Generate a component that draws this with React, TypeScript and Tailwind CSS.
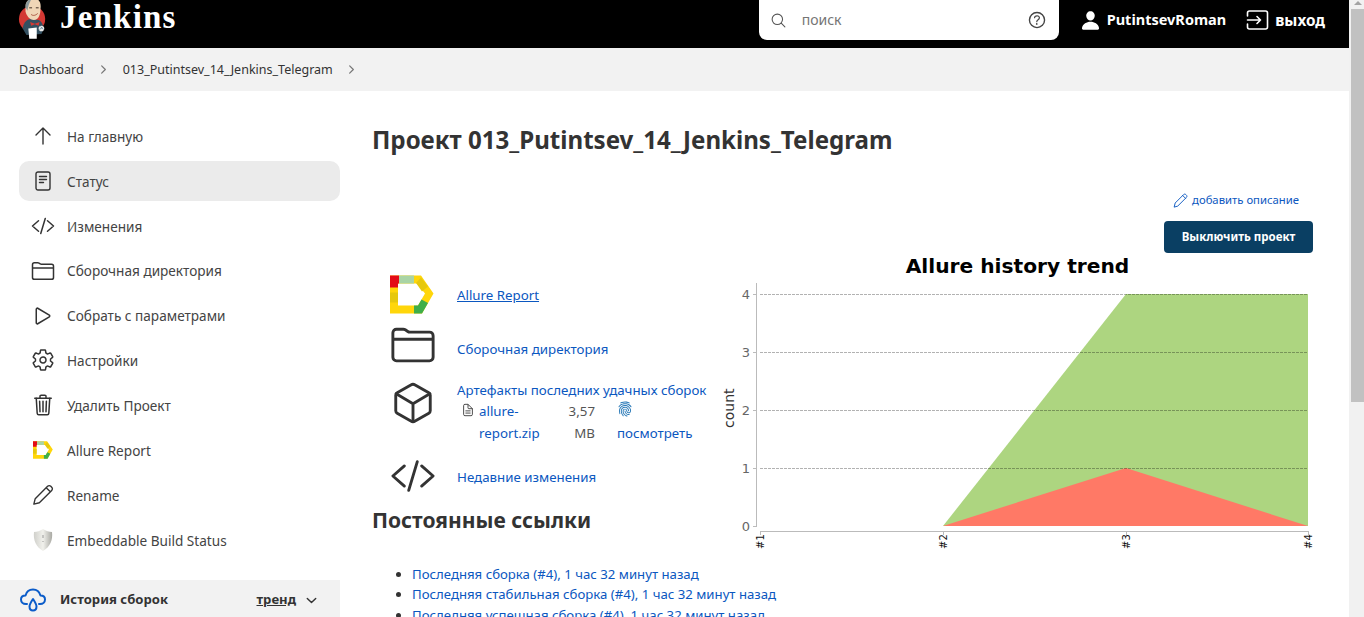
import React from 'react';
import {
  IoCodeSlashOutline,
  IoFolderOutline,
  IoPlayOutline,
  IoSettingsOutline,
  IoTrashOutline,
  IoCubeOutline,
  IoSearchOutline,
  IoHelpCircleOutline,
  IoPerson,
  IoFingerPrint,
  IoDocumentTextOutline,
  IoChevronForward,
  IoChevronDown,
} from 'react-icons/io5';

const JenkinsLogo = () => (
  <svg viewBox="0 0 32 42" className="w-[30px] h-10 shrink-0">
    <circle cx="15" cy="20" r="14" fill="#d33833" />
    <path d="M5 30 C6 23 10 20 14 20 L22 21 C26 23 27 27 27 31 L25 36 L9 37 Z" fill="#335061" />
    <path d="M8 6 C8 1 12 -2 17 -2 C22 -2 25 2 24 9 C24 15 22 21 17 21 C12 21 9 16 8 12 Z" fill="#f0d6b7" />
    <path d="M8 7 C8 2 11 -1 15 -2 C12 2 11 6 10 11 Z" fill="#49728b" opacity="0.6" />
    <path d="M12 8 h3 M19 8 h3" stroke="#3a2a20" strokeWidth="1" />
    <path d="M14 15 C16 17 19 16 21 14" stroke="#a5503c" strokeWidth="1" fill="none" />
    <path d="M13 23 L18 25 L23 23 L22 27 L18 25.5 L14 27 Z" fill="#d33833" />
    <path d="M11 30 L20 29 L20 41 L12 41 Z" fill="#ffffff" />
    <circle cx="25" cy="30" r="3" fill="#e8e8e8" />
    <path d="M24 28 l3 3 M23 31 l3 -2" stroke="#49728b" strokeWidth="0.7" />
  </svg>
);

const AllureLogo = ({ className }: { className: string }) => (
  <svg viewBox="0 0 44 38" className={className}>
    <path d="M0 0 H31 L43.5 18 L32 38 H0 Z M8 8 V30 H28 L35 18 L27 8 Z" fill="#ffd60a" fillRule="evenodd" />
    <path d="M0 0 H9 V8 H8 V12 H0 Z" fill="#e30b17" />
    <path d="M9 0 H24 V8 H9 Z" fill="#a9d4a5" />
    <path d="M0 17 H8 V27 H0 Z" fill="#e6c80d" />
    <path d="M31 2 L38 11 L32 16 L26 7.5 Z" fill="#e6c80d" />
    <path d="M24 38 H32 L38 27.5 L31.5 24 L28 30 H24 Z" fill="#3fae49" />
  </svg>
);

const StatusIcon = () => (
  <svg viewBox="0 0 16 20" className="w-4 h-5" fill="none" stroke="#333" strokeWidth="1.4" strokeLinecap="round">
    <rect x="1" y="1" width="14" height="18" rx="2" />
    <path d="M4.5 5.5 H11.5 M4.5 8.5 H11.5 M4.5 11.5 H8.5" />
  </svg>
);

const ArrowIcon = () => (
  <svg viewBox="0 0 16 18" className="w-4 h-[18px]" fill="none" stroke="#333" strokeWidth="1.4" strokeLinecap="round" strokeLinejoin="round">
    <path d="M8 17 V1 M1 8 L8 1 L15 8" />
  </svg>
);

const PencilIcon = ({ size, color }: { size: number; color: string }) => (
  <svg viewBox="0 0 24 24" width={size} height={size} fill="none" stroke={color} strokeWidth="1.5" strokeLinejoin="round" strokeLinecap="round">
    <path d="M2 22 L3.5 16 L17 2.5 C18 1.5 19.5 1.5 20.5 2.5 L21.5 3.5 C22.5 4.5 22.5 6 21.5 7 L8 20.5 Z M15.5 4 L20 8.5" />
  </svg>
);

const ShieldIcon = () => (
  <svg viewBox="0 0 20 22" className="w-5 h-[22px]">
    <defs>
      <linearGradient id="shield" x1="0" y1="0" x2="1" y2="0">
        <stop offset="0" stopColor="#d0d0cb" />
        <stop offset="0.5" stopColor="#f1f1ec" />
        <stop offset="1" stopColor="#a9a9a3" />
      </linearGradient>
    </defs>
    <path d="M10 0 C7 2 4 3 1 3 C0 11 3 18 10 22 C17 18 20 11 19 3 C16 3 13 2 10 0 Z" fill="url(#shield)" />
    <path d="M10 6 V9 M10 12 V13" stroke="#999" strokeWidth="1" />
  </svg>
);

const CloudDropIcon = () => (
  <svg viewBox="0 0 26 24" className="w-[26px] h-6" fill="none" stroke="#0b5cc9" strokeWidth="2" strokeLinecap="round" strokeLinejoin="round">
    <path d="M7 16 H6 C3 16 1 14 1 11.5 C1 9 3 7.5 5.5 7.5 C6.5 3.5 9.5 1.5 13 1.5 C17 1.5 19.5 4 20.5 7.5 C23 7.5 25 9 25 11.5 C25 14 23 16 20 16 H19" />
    <path d="M13 11 C11 14 9.5 16 9.5 18.5 C9.5 20.8 11 22.5 13 22.5 C15 22.5 16.5 20.8 16.5 18.5 C16.5 16 15 14 13 11 Z" />
  </svg>
);

const LogoutIcon = () => (
  <svg viewBox="0 0 22 20" className="w-[23px] h-5" fill="none" stroke="#fff" strokeWidth="1.6" strokeLinecap="round" strokeLinejoin="round">
    <path d="M1 6 V3 C1 1.8 1.8 1 3 1 H19 C20.2 1 21 1.8 21 3 V17 C21 18.2 20.2 19 19 19 H3 C1.8 19 1 18.2 1 17 V14" />
    <path d="M1 10 H14 M10.5 6.5 L14 10 L10.5 13.5" />
  </svg>
);

const sideItems = [
  { label: 'На главную', icon: <ArrowIcon /> },
  { label: 'Статус', icon: <StatusIcon />, active: true },
  { label: 'Изменения', icon: <IoCodeSlashOutline size={24} /> },
  { label: 'Сборочная директория', icon: <IoFolderOutline size={24} /> },
  { label: 'Собрать с параметрами', icon: <IoPlayOutline size={24} /> },
  { label: 'Настройки', icon: <IoSettingsOutline size={24} /> },
  { label: 'Удалить Проект', icon: <IoTrashOutline size={24} /> },
  { label: 'Allure Report', icon: <AllureLogo className="w-5 h-[18px]" /> },
  { label: 'Rename', icon: <PencilIcon size={22} color="#333" /> },
  { label: 'Embeddable Build Status', icon: <ShieldIcon /> },
];

const permalinks = [
  'Последняя сборка (#4), 1 час 32 минут назад',
  'Последняя стабильная сборка (#4), 1 час 32 минут назад',
  'Последняя успешная сборка (#4), 1 час 32 минут назад',
];

const TrendChart = () => {
  const gridY = [294, 352, 410, 468, 526];
  const ticks = [
    { x: 760, label: '#1' },
    { x: 943, label: '#2' },
    { x: 1126, label: '#3' },
    { x: 1308, label: '#4' },
  ];
  return (
    <svg viewBox="720 250 600 310" className="w-[600px] h-[310px] shrink-0">
      <polygon points="943,526 1126,294 1308,294 1308,526" fill="#add580" />
      <polygon points="943,526 1126,468 1308,526" fill="#ff7966" />
      {gridY.slice(0, 4).map((y) => (
        <line key={y} x1="760" x2="1308" y1={y + 0.5} y2={y + 0.5} stroke="#000" strokeOpacity="0.3" strokeDasharray="3 1" />
      ))}
      <line x1="756.5" x2="756.5" y1="283" y2="527" stroke="#bbb" />
      <line x1="760" x2="1308" y1="531.5" y2="531.5" stroke="#bbb" />
      {gridY.map((y) => (
        <line key={y} x1="756" x2="753" y1={y + 0.5} y2={y + 0.5} stroke="#bbb" />
      ))}
      {gridY.map((y, i) => (
        <text key={y} x="746" y={y + 5} textAnchor="middle" fontSize="13" fill="#666" fontFamily="'DejaVu Sans', sans-serif">
          {4 - i}
        </text>
      ))}
      {ticks.map((t) => (
        <g key={t.x}>
          <line x1={t.x + 0.5} x2={t.x + 0.5} y1="531" y2="535" stroke="#bbb" />
          <text
            transform={`translate(${t.x + 4} 549) rotate(-90)`}
            fontSize="10"
            fill="#111"
            fontFamily="'DejaVu Sans', sans-serif"
          >
            {t.label}
          </text>
        </g>
      ))}
      <text transform="translate(734 428) rotate(-90)" fontSize="14" fill="#333" fontFamily="'DejaVu Sans', sans-serif">
        count
      </text>
      <text x="1017.5" y="273" textAnchor="middle" fontSize="20.2" fontWeight="bold" fill="#000" fontFamily="'DejaVu Sans', sans-serif">
        Allure history trend
      </text>
    </svg>
  );
};

const App: React.FC = () => {
  return (
    <div className="flex h-[617px] w-[1364px] overflow-hidden bg-white text-[#333] font-['Noto_Sans',sans-serif]">
      <div className="w-[1349px] shrink-0 flex flex-col">
        {/* Шапка */}
        <header className="h-12 bg-black flex items-start shrink-0 pl-[18px] pr-[24px]">
          <div className="flex items-center gap-3 h-10 overflow-hidden">
            <JenkinsLogo />
            <span className="text-white text-[33px] font-bold font-['Liberation_Serif',serif] tracking-[1.2px] leading-none -mt-[5px]">
              Jenkins
            </span>
          </div>
          <div className="ml-auto w-[300px] h-10 bg-white rounded-b-lg flex items-center px-[11px]">
            <IoSearchOutline size={17} color="#555" />
            <span className="ml-[15px] text-sm text-[#757575]">поиск</span>
            <IoHelpCircleOutline size={22} color="#444" className="ml-auto" />
          </div>
          <div className="flex items-center h-10 ml-[21px] text-white font-bold">
            <IoPerson size={21} />
            <span className="ml-[6px] text-[14.5px]">PutintsevRoman</span>
            <span className="ml-[20px]"><LogoutIcon /></span>
            <span className="ml-[6px] text-[15.3px]">выход</span>
          </div>
        </header>

        {/* Хлебные крошки */}
        <nav className="h-[43px] shrink-0 bg-[#f2f2f2] flex items-center pl-[19px] text-[12.5px] text-[#333]">
          <span className="pt-[1px]">Dashboard</span>
          <IoChevronForward size={13} color="#777" className="ml-[13px]" />
          <span className="ml-[13px] pt-[1px]">013_Putintsev_14_Jenkins_Telegram</span>
          <IoChevronForward size={13} color="#777" className="ml-[12px]" />
        </nav>

        <div className="flex flex-1 min-h-0">
          {/* Боковая панель */}
          <aside className="w-[340px] shrink-0 pt-[25px] flex flex-col">
            <div className="flex flex-col gap-[4.9px] pl-[19px]">
              {sideItems.map((item) => (
                <div
                  key={item.label}
                  className={`h-10 flex items-center rounded-[10px] text-[13.6px] ${item.active ? 'bg-[#ebebeb]' : ''}`}
                >
                  <span className="w-12 flex justify-center shrink-0 text-[#333]">{item.icon}</span>
                  <span className="text-[#444] pt-[2px]">{item.label}</span>
                </div>
              ))}
            </div>
            <div className="mt-[20px] h-[40px] bg-[#f2f2f2] flex items-center pl-5 pr-[21px] shrink-0">
              <CloudDropIcon />
              <span className="ml-[14px] text-[13.1px] font-bold text-[#333]">История сборок</span>
              <span className="ml-auto text-[13.1px] font-bold text-[#333] underline">тренд</span>
              <IoChevronDown size={15} color="#333" className="ml-[8px]" />
            </div>
          </aside>

          {/* Основная часть */}
          <main className="flex-1 min-w-0 pl-8 pr-[36px] pt-[32px]">
            <h1 className="text-[24.1px] leading-[34px] font-bold text-[#333]">Проект 013_Putintsev_14_Jenkins_Telegram</h1>
            <div className="mt-[35px] flex justify-end items-center pr-[14px] text-[11.3px] text-[#0b57c0]">
              <PencilIcon size={15} color="#0b57c0" />
              <span className="ml-[4px]">добавить описание</span>
            </div>
            <div className="mt-[12px] flex justify-end">
              <button className="w-[149px] h-8 rounded bg-[#0a3f63] text-white text-[11.5px] font-bold">Выключить проект</button>
            </div>
            <div className="flex justify-between -mr-[7px] mt-[-3px]">
              <div className="w-[340px] shrink-0 text-[13.3px]">
                <div className="flex items-center h-[80px] mt-[6px] pl-[18px]">
                  <AllureLogo className="w-[44px] h-[39px] shrink-0 -mt-[2px]" />
                  <a className="ml-[23px] text-[#0b57c0] underline mt-[1px]">Allure Report</a>
                </div>
                <div className="flex items-center h-[38px] -mt-[10px] pl-[18px]">
                  <IoFolderOutline size={46} className="shrink-0" />
                  <a className="ml-[21px] text-[#0b57c0] mt-[10px]">Сборочная директория</a>
                </div>
                <div className="flex mt-[15px] pl-[18px]">
                  <IoCubeOutline size={46} className="shrink-0 mt-[1px]" />
                  <div className="ml-[21px] leading-[22px]">
                    <a className="text-[#0b57c0] whitespace-nowrap">Артефакты последних удачных сборок</a>
                    <div className="grid grid-cols-[18px_82px_34px_80px] ml-[4px] -mt-[1px]">
                      <IoDocumentTextOutline size={14} className="mt-[3px]" />
                      <a className="text-[#0b57c0]">allure-<br />report.zip</a>
                      <span className="text-right text-[#555]">3,57<br />MB</span>
                      <a className="text-[#0b57c0] pl-[22px]">
                        <IoFingerPrint size={16} className="mt-[1px] mb-[5px]" color="#2a7ab8" />
                        посмотреть
                      </a>
                    </div>
                  </div>
                </div>
                <div className="flex items-center h-[46px] mt-[11px] pl-[18px]">
                  <IoCodeSlashOutline size={46} className="shrink-0 -mt-[4px]" />
                  <a className="ml-[21px] text-[#0b57c0]">Недавние изменения</a>
                </div>
                <h2 className="mt-[5px] text-[21px] leading-7 font-bold text-[#333] whitespace-nowrap">Постоянные ссылки</h2>
                <ul className="mt-[30px] pl-10 list-disc text-[13.2px] leading-[20.5px] text-[#333] whitespace-nowrap">
                  {permalinks.map((link) => (
                    <li key={link}>
                      <a className="text-[#0b57c0]">{link}</a>
                    </li>
                  ))}
                </ul>
              </div>
              <TrendChart />
            </div>
          </main>
        </div>
      </div>

      {/* Полоса прокрутки */}
      <div className="w-[15px] shrink-0 bg-[#f1f1f1] flex flex-col pl-[2px]">
        <div className="h-[9px] flex justify-center pt-[1px]">
          <div className="w-0 h-0 border-x-[4px] border-x-transparent border-b-[4px] border-b-[#a3a3a3]" />
        </div>
        <div className="w-full h-[393px] bg-[#c1c1c1]" />
      </div>
    </div>
  );
};

export default App;
